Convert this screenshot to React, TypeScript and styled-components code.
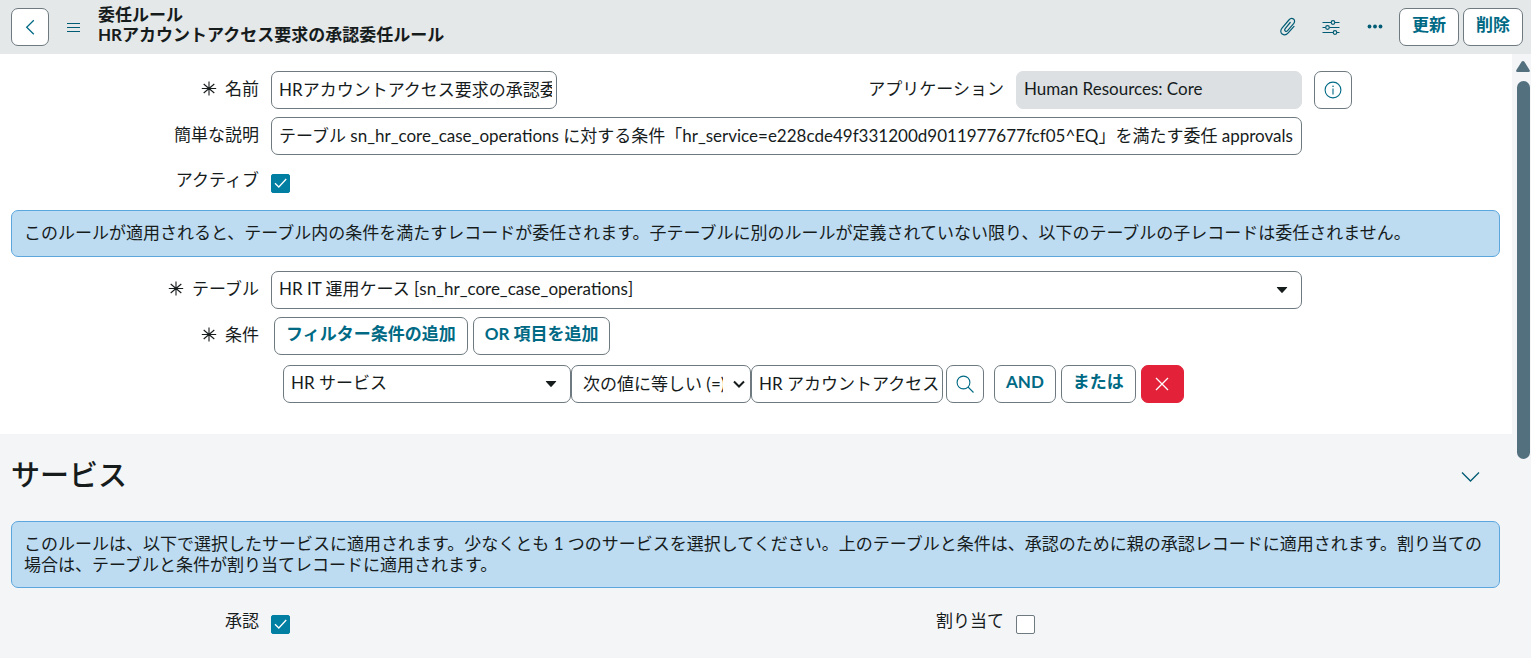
import React from "react";
import styled, { createGlobalStyle, css } from "styled-components";

const color = {
  text: "#161b1c",
  teal: "#006a85",
  icon: "#005c74",
  border: "#6e7a7f",
  header: "#e4e8e9",
  panel: "#f4f5f7",
  scroll: "#53707f",
  check: "#007fa3",
};

const GlobalStyle = createGlobalStyle`
  *, *::before, *::after { box-sizing: border-box; }
  body {
    margin: 0;
    background: #fff;
    color: ${color.text};
    font-family: Lato, "Noto Sans CJK JP", sans-serif;
    font-size: 17px;
    line-height: 21px;
  }
  button, input, select { font: inherit; color: inherit; margin: 0; }
`;

const Page = styled.div`
  display: flex;
  flex-direction: column;
  height: 100vh;
  overflow: hidden;
`;

const Header = styled.header`
  display: flex;
  align-items: center;
  flex: none;
  height: 54px;
  padding: 0 8px 0 11px;
  background: ${color.header};
`;

const Title = styled.h1`
  flex: 1;
  margin: 0;
  padding-bottom: 4px;
  font-size: 17px;
  line-height: 20px;
  font-weight: 700;
`;

const TitleLine = styled.span`
  display: block;
`;

const HeaderActions = styled.div`
  display: flex;
  align-items: center;
  gap: 4px;
`;

const IconButton = styled.button`
  display: flex;
  align-items: center;
  justify-content: center;
  width: 40px;
  height: 38px;
  padding: 0;
  border: 0;
  background: transparent;
  color: ${color.icon};
`;

const MenuButton = styled(IconButton)`
  width: 49px;
`;

const Button = styled.button<{ $square?: boolean; $danger?: boolean }>`
  display: flex;
  align-items: center;
  justify-content: center;
  flex: none;
  height: 38px;
  padding: 0 11px 5px;
  border: 1px solid ${color.border};
  border-radius: 7px;
  background: #fff;
  color: ${color.teal};
  font-weight: 700;
  white-space: nowrap;
  ${(p) => p.$square && css`width: 38px; padding: 0;`}
  ${(p) =>
    p.$danger &&
    css`
      width: 43px;
      padding: 0;
      border-color: #e32239;
      background: #e32239;
      color: #fff;
    `}
`;

const ActionButton = styled(Button)`
  width: 60px;
`;

const Body = styled.div`
  display: flex;
  flex: 1;
  min-height: 0;
`;

const Main = styled.main`
  display: flex;
  flex-direction: column;
  flex: 1;
  min-width: 0;
`;

const ScrollTrack = styled.div`
  display: flex;
  flex-direction: column;
  align-items: flex-end;
  flex: none;
  gap: 9px;
  width: 19px;
  padding: 7px 1px 0 0;
  background: ${color.panel};
`;

const ScrollThumb = styled.div`
  width: 13px;
  height: calc(63% + 2px);
  border-radius: 7px;
  background: ${color.scroll};
`;

const FormBlock = styled.section`
  padding: 17px 12px 31px 11px;
`;

const Services = styled.section`
  flex: 1;
  padding: 21px 12px 0 11px;
  background: ${color.panel};
`;

const Row = styled.div<{ $gap?: number }>`
  display: grid;
  grid-template-columns: 248px minmax(0, 286fr) minmax(0, 435fr) minmax(0, 286fr) 186px;
  column-gap: 12px;
  align-items: center;
  margin-bottom: ${(p) => p.$gap ?? 8}px;
`;

const Label = styled.label`
  display: flex;
  align-items: center;
  justify-content: flex-end;
  gap: 8px;
  padding-bottom: 4px;
  text-align: right;
  white-space: nowrap;
`;

const field = css`
  display: block;
  width: 100%;
  height: 38px;
  padding: 0 4px 3px 7px;
  border: 1px solid ${color.border};
  border-radius: 7px;
  background: #fff;
  color: ${color.text};
`;

const TextInput = styled.input`
  ${field}
  &:read-only {
    border-color: #dce0e3;
    background: #dce0e3;
  }
`;

const Wide = styled.div`
  grid-column: 2 / 5;
  min-width: 0;
`;

const SelectBox = styled.div`
  position: relative;
  min-width: 0;
`;

const Select = styled.select<{ $inset?: boolean }>`
  ${field}
  appearance: none;
  padding: ${(p) => (p.$inset ? "0 27px 2px 11px" : "0 32px 3px 7px")};
`;

const SelectMark = styled.span<{ $right: number }>`
  position: absolute;
  top: 0;
  right: ${(p) => p.$right}px;
  display: flex;
  align-items: center;
  height: 100%;
  pointer-events: none;
`;

const CheckBox = styled.span`
  position: relative;
  display: block;
  width: 19px;
  height: 19px;
  svg {
    position: absolute;
    top: 0;
    left: 0;
    visibility: hidden;
    pointer-events: none;
  }
  input:checked + svg { visibility: visible; }
`;

const CheckInput = styled.input`
  appearance: none;
  display: block;
  width: 19px;
  height: 19px;
  border: 1px solid ${color.border};
  border-radius: 2px;
  background: #fff;
  &:checked {
    border-color: ${color.check};
    background: ${color.check};
  }
`;

const CheckRow = styled(Row)`
  align-items: end;
  ${Label} { padding-bottom: 3px; }
`;

const Banner = styled.p`
  margin: 0 0 14px;
  padding: 11px 12px;
  border: 1px solid #5ba7dd;
  border-radius: 7px;
  background: #bddbf1;
  text-align: left;
  min-height: 47px;
`;

const ServiceBanner = styled(Banner)`
  min-height: 67px;
  margin-bottom: 22px;
`;

const FilterButtons = styled.div`
  grid-column: 2 / 6;
  display: flex;
  gap: 5px;
  padding-left: 3px;
`;

const FilterRow = styled.div`
  display: flex;
  align-items: center;
  margin-top: 10px;
  padding-left: 272px;
`;

const FieldCell = styled.div`
  width: 288px;
`;

const OperatorCell = styled.div`
  width: 180px;
`;

const ValueCell = styled.div`
  width: 192px;
  margin-right: 3px;
`;

const Joiners = styled.div`
  display: flex;
  gap: 5px;
  margin-left: 10px;
`;

const SectionHead = styled.div`
  display: flex;
  align-items: center;
  justify-content: space-between;
  height: 40px;
  margin-bottom: 26px;
  padding-right: 10px;
`;

const SectionTitle = styled.h2`
  margin: 0;
  font-size: 29px;
  line-height: 40px;
  font-weight: 500;
`;

const Required = () => (
  <svg width="16" height="16" viewBox="0 0 16 16" fill="none" stroke="currentColor" strokeWidth="1.1" aria-label="必須">
    <path d="M.8 8.500h14.400M8 1.500v14M2.700 4l10.600 9M13.300 4L2.700 13" />
  </svg>
);

const Triangle = () => (
  <svg width="12" height="8" viewBox="0 0 12 8" fill="currentColor">
    <path d="M1.2 1h9.6q.8 0 .2.7L6.7 6.6q-.7.7-1.4 0L1 1.7Q.4 1 1.200 1z" />
  </svg>
);

const Check = () => (
  <svg width="19" height="19" viewBox="0 0 19 19" fill="none" stroke="#fff" strokeWidth="1.3">
    <path d="M4 9.300l3.800 3.700L15.200 5" />
  </svg>
);

const Search = () => (
  <svg width="20" height="20" viewBox="0 0 20 20" fill="none" stroke="currentColor" strokeWidth="1.1">
    <circle cx="8.500" cy="8.500" r="6.400" />
    <path d="M13 13l5.500 5.500" />
  </svg>
);

const Info = () => (
  <svg width="18" height="18" viewBox="0 0 18 18" fill="none" stroke="currentColor" strokeWidth="1.100">
    <circle cx="9" cy="9" r="7.900" />
    <path d="M9 7.500v6" />
    <circle cx="9" cy="5.200" r=".8" fill="currentColor" stroke="none" />
  </svg>
);

const Clip = () => (
  <svg width="18" height="20" viewBox="-1 1 18 20" fill="none" stroke="currentColor" strokeWidth="1.200" strokeLinecap="round">
    <path d="M11.200 6.500L6.200 12.600c-1.500 2 .8 3.800 2.400 2L14.600 7.700c3-3.700-1.600-7.400-4.700-3.700L3 12.100c-3.800 4.800 2.200 9.400 6.200 4.800L15 10.400" />
  </svg>
);

const Sliders = () => (
  <svg width="18" height="16" viewBox="0 0 18 16" fill="none" stroke="currentColor" strokeWidth="1.200">
    <path d="M.5 3.500H9M13 3.500h4.500M.5 8.500H3.500M7.500 8.500h10M.5 13.500H11M15 13.500h2.500" />
    <circle cx="11" cy="3.500" r="1.800" />
    <circle cx="5.500" cy="8.500" r="1.800" />
    <circle cx="13" cy="13.500" r="1.800" />
  </svg>
);

function CheckField({ id, checked }: { id: string; checked?: boolean }) {
  return (
    <CheckBox>
      <CheckInput id={id} type="checkbox" defaultChecked={checked} />
      <Check />
    </CheckBox>
  );
}

export default function App() {
  return (
    <>
      <GlobalStyle />
      <Page>
        <Header>
          <Button $square aria-label="戻る">
            <svg width="18" height="18" viewBox="0 0 18 18" fill="none" stroke="currentColor" strokeWidth="1.300">
              <path d="M12.800 2.200L5.700 9.200l7.100 7.100" />
            </svg>
          </Button>
          <MenuButton aria-label="メニュー">
            <svg width="14" height="10" viewBox="0 0 14 10" stroke="currentColor" strokeWidth="1">
              <path d="M0 1.500h13M0 5.500h13M0 9.500h13" />
            </svg>
          </MenuButton>
          <Title>
            <TitleLine>委任ルール</TitleLine>
            <TitleLine>HRアカウントアクセス要求の承認委任ルール</TitleLine>
          </Title>
          <HeaderActions>
            <IconButton aria-label="添付ファイル"><Clip /></IconButton>
            <IconButton aria-label="設定"><Sliders /></IconButton>
            <IconButton aria-label="その他">
              <svg width="16" height="6" viewBox="0 0 16 6" fill="currentColor">
                <circle cx="2.500" cy="2.500" r="1.900" />
                <circle cx="8" cy="2.500" r="1.900" />
                <circle cx="13.500" cy="2.500" r="1.900" />
              </svg>
            </IconButton>
            <ActionButton>更新</ActionButton>
            <ActionButton>削除</ActionButton>
          </HeaderActions>
        </Header>
        <Body>
          <Main>
            <FormBlock>
              <Row>
                <Label htmlFor="name"><Required />名前</Label>
                <TextInput id="name" defaultValue="HRアカウントアクセス要求の承認委任ルール" />
                <Label htmlFor="app">アプリケーション</Label>
                <TextInput id="app" readOnly value="Human Resources: Core" />
                <Button $square aria-label="情報"><Info /></Button>
              </Row>
              <Row $gap={14}>
                <Label htmlFor="desc">簡単な説明</Label>
                <Wide>
                  <TextInput
                    id="desc"
                    defaultValue="テーブル sn_hr_core_case_operations に対する条件「hr_service=e228cde49f331200d9011977677fcf05^EQ」を満たす委任 approvals"
                  />
                </Wide>
              </Row>
              <CheckRow $gap={17}>
                <Label htmlFor="active">アクティブ</Label>
                <CheckField id="active" checked />
              </CheckRow>
              <Banner>
                このルールが適用されると、テーブル内の条件を満たすレコードが委任されます。子テーブルに別のルールが定義されていない限り、以下のテーブルの子レコードは委任されません。
              </Banner>
              <Row>
                <Label htmlFor="table"><Required />テーブル</Label>
                <Wide>
                  <SelectBox>
                    <Select id="table">
                      <option>HR IT 運用ケース [sn_hr_core_case_operations]</option>
                    </Select>
                    <SelectMark $right={14}><Triangle /></SelectMark>
                  </SelectBox>
                </Wide>
              </Row>
              <Row $gap={0}>
                <Label as="span"><Required />条件</Label>
                <FilterButtons>
                  <Button>フィルター条件の追加</Button>
                  <Button>OR 項目を追加</Button>
                </FilterButtons>
              </Row>
              <FilterRow>
                <FieldCell>
                  <SelectBox>
                    <Select aria-label="項目"><option>HR サービス</option></Select>
                    <SelectMark $right={14}><Triangle /></SelectMark>
                  </SelectBox>
                </FieldCell>
                <OperatorCell>
                  <SelectBox>
                    <Select $inset aria-label="演算子"><option>次の値に等しい (=)</option></Select>
                    <SelectMark $right={6}>
                      <svg width="12" height="8" viewBox="0 0 12 8" fill="none" stroke="currentColor" strokeWidth="2">
                        <path d="M1 1.500l5 5 5-5" />
                      </svg>
                    </SelectMark>
                  </SelectBox>
                </OperatorCell>
                <ValueCell>
                  <TextInput aria-label="値" defaultValue="HR アカウントアクセス" />
                </ValueCell>
                <Button $square aria-label="検索"><Search /></Button>
                <Joiners>
                  <Button>AND</Button>
                  <Button>または</Button>
                  <Button $danger aria-label="条件を削除">
                    <svg width="14" height="14" viewBox="0 0 14 14" stroke="currentColor" strokeWidth="1.300">
                      <path d="M1 1l12 12M13 1L1 13" />
                    </svg>
                  </Button>
                </Joiners>
              </FilterRow>
            </FormBlock>
            <Services>
              <SectionHead>
                <SectionTitle>サービス</SectionTitle>
                <IconButton aria-label="折りたたむ">
                  <svg width="20" height="16" viewBox="0 0 20 16" fill="none" stroke="currentColor" strokeWidth="1.300">
                    <path d="M2 5.500l8.500 8.500L19 5.500" />
                  </svg>
                </IconButton>
              </SectionHead>
              <ServiceBanner>
                このルールは、以下で選択したサービスに適用されます。少なくとも 1 つのサービスを選択してください。上のテーブルと条件は、承認のために親の承認レコードに適用されます。割り当ての場合は、テーブルと条件が割り当てレコードに適用されます。
              </ServiceBanner>
              <CheckRow>
                <Label htmlFor="approval">承認</Label>
                <CheckField id="approval" checked />
                <Label htmlFor="assignment">割り当て</Label>
                <CheckField id="assignment" />
              </CheckRow>
            </Services>
          </Main>
          <ScrollTrack aria-hidden="true">
            <svg width="14" height="11" viewBox="0 0 14 11" fill={color.scroll}>
              <path d="M7 0q.8 0 1.400.8L13.600 9q.8 2-1 2H1.400q-1.800 0-1-2L5.600.8Q6.200 0 7 0z" />
            </svg>
            <ScrollThumb />
          </ScrollTrack>
        </Body>
      </Page>
    </>
  );
}
